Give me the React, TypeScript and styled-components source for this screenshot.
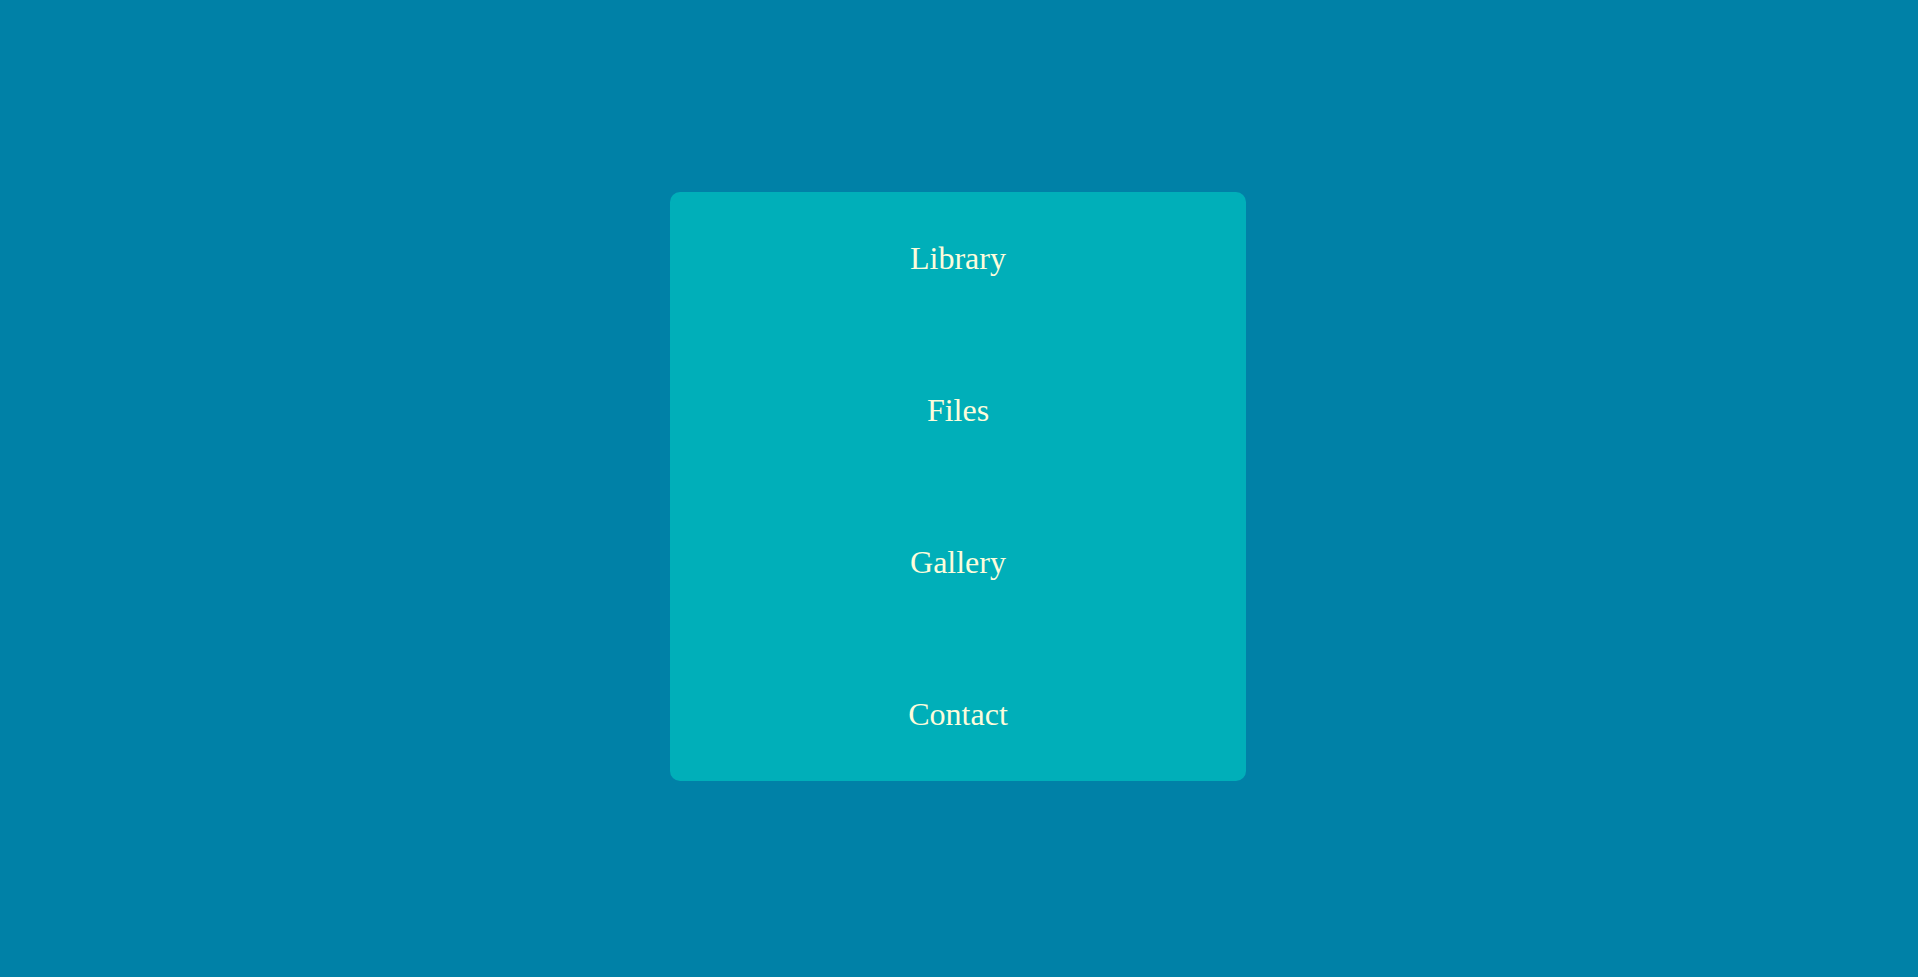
import React from "react";
import styled, { createGlobalStyle } from "styled-components";

const Global = createGlobalStyle`
  html, body { margin: 0; padding: 0; height: 100%; }
  body { background: #0081a7; font-family: "Liberation Serif", "Times New Roman", serif; }
  #root { height: 100%; }
`;

const Page = styled.div`
  min-height: 977px;
  display: flex;
  align-items: center;
  justify-content: center;
  padding-right: 2px;
  padding-bottom: 4px;
  box-sizing: border-box;
`;

const Menu = styled.nav`
  width: 576px;
  background: #00afb9;
  border-radius: 10px;
  display: flex;
  flex-direction: column;
  gap: 19px;
`;

const Item = styled.a`
  height: 133px;
  display: flex;
  align-items: center;
  justify-content: center;
  color: #fdfcdc;
  font-size: 32px;
  text-decoration: none;
  cursor: pointer;
`;

export default function App() {
  const items = ["Library", "Files", "Gallery", "Contact"];
  return (
    <>
      <Global />
      <Page>
        <Menu>
          {items.map((t) => (
            <Item key={t}>{t}</Item>
          ))}
        </Menu>
      </Page>
    </>
  );
}
